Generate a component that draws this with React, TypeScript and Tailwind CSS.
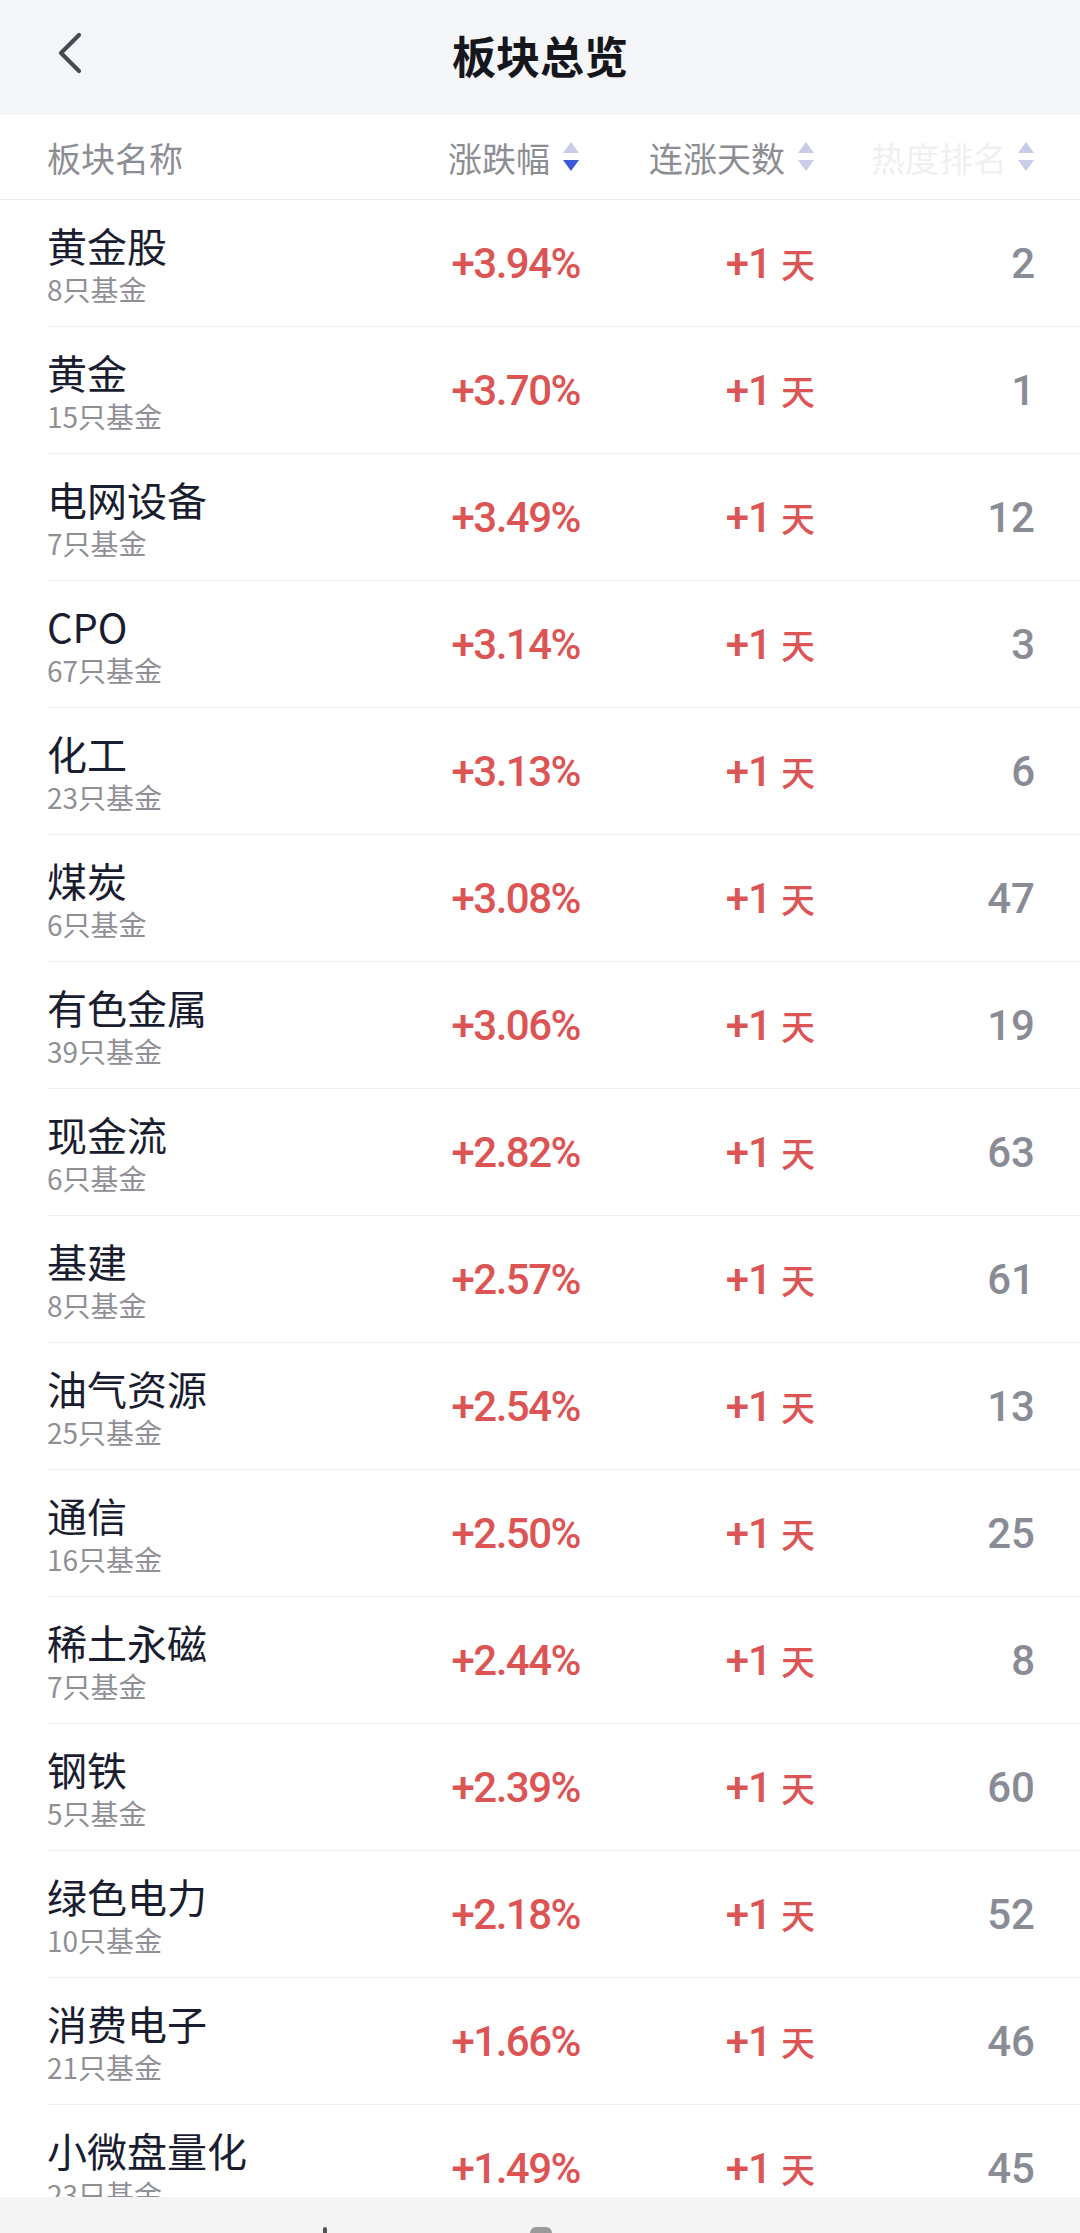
import React from "react";

const rows = [
  { name: "黄金股", funds: 8, pct: "+3.94%", rank: 2 },
  { name: "黄金", funds: 15, pct: "+3.70%", rank: 1 },
  { name: "电网设备", funds: 7, pct: "+3.49%", rank: 12 },
  { name: "CPO", funds: 67, pct: "+3.14%", rank: 3 },
  { name: "化工", funds: 23, pct: "+3.13%", rank: 6 },
  { name: "煤炭", funds: 6, pct: "+3.08%", rank: 47 },
  { name: "有色金属", funds: 39, pct: "+3.06%", rank: 19 },
  { name: "现金流", funds: 6, pct: "+2.82%", rank: 63 },
  { name: "基建", funds: 8, pct: "+2.57%", rank: 61 },
  { name: "油气资源", funds: 25, pct: "+2.54%", rank: 13 },
  { name: "通信", funds: 16, pct: "+2.50%", rank: 25 },
  { name: "稀土永磁", funds: 7, pct: "+2.44%", rank: 8 },
  { name: "钢铁", funds: 5, pct: "+2.39%", rank: 60 },
  { name: "绿色电力", funds: 10, pct: "+2.18%", rank: 52 },
  { name: "消费电子", funds: 21, pct: "+1.66%", rank: 46 },
  { name: "小微盘量化", funds: 23, pct: "+1.49%", rank: 45 },
];

function SortIcon({ active }: { active?: boolean }) {
  return (
    <svg width="18" height="32" viewBox="0 0 18 32" className="shrink-0">
      <path d="M9 1 L17 12 L1 12 Z" fill="#c9cbe8" />
      <path d="M1 19 L17 19 L9 30 Z" fill={active ? "#3c5ad8" : "#c9cbe8"} />
    </svg>
  );
}

export default function App() {
  return (
    <div className="w-[1080px] h-[2233px] flex flex-col bg-white overflow-hidden font-['Noto_Sans_CJK_SC','Noto_Sans',sans-serif]">
      {/* top bar */}
      <div className="h-[115px] shrink-0 bg-[#f5f6fa] flex items-center relative pb-[10px]">
        <div className="pl-[56px]">
          <svg width="28" height="44" viewBox="0 0 28 44">
            <path d="M23 4 L5 22 L23 40" fill="none" stroke="#474a52" strokeWidth="4.2" strokeLinecap="round" strokeLinejoin="round" />
          </svg>
        </div>
        <div className="absolute inset-x-0 top-[31px] text-center text-[44px] font-bold text-[#16171c] leading-[48px] pointer-events-none">
          板块总览
        </div>
      </div>

      {/* column header */}
      <div className="h-[85px] shrink-0 flex items-center pl-[47px] pr-[45px] border-b border-[#ececf0] text-[34px] text-[#8d8e93]">
        <div className="w-[400px]">板块名称</div>
        <div className="w-[133px] flex items-center justify-end gap-[12px]">
          <span>涨跌幅</span>
          <SortIcon active />
        </div>
        <div className="w-[235px] flex items-center justify-end gap-[12px]">
          <span>连涨天数</span>
          <SortIcon />
        </div>
        <div className="w-[220px] flex items-center justify-end gap-[10px]">
          <span className="text-[#f0f0f4]">热度排名</span>
          <SortIcon />
        </div>
      </div>

      {/* list */}
      <div className="flex-1 overflow-hidden">
        {rows.map((r) => (
          <div key={r.name} className="ml-[47px] h-[127px] flex items-center pr-[45px] border-b border-[#f0f0f3]">
            <div className="w-[400px] flex flex-col pt-[2px]">
              <span className="text-[40px] leading-[50px] text-[#1a1d30]">{r.name}</span>
              <span className="text-[28px] leading-[38px] text-[#8e9096]">{r.funds}只基金</span>
            </div>
            <div className="w-[133px] text-right font-['Roboto',sans-serif] font-medium text-[42px] tracking-[-1.5px] text-[#dc5454]">
              {r.pct}
            </div>
            <div className="w-[235px] flex items-center justify-end text-[#dc5454]">
              <span className="font-['Roboto',sans-serif] font-medium text-[42px] tracking-[-1px]">+1</span>
              <span className="ml-[10px] text-[34px] font-medium">天</span>
            </div>
            <div className="w-[220px] text-right font-['Roboto',sans-serif] font-medium text-[42px] text-[#8a8c95]">
              {r.rank}
            </div>
          </div>
        ))}
      </div>

      {/* bottom bar, cut off */}
      <div className="h-[36px] shrink-0 bg-[#f4f4f4] flex items-start pt-[30px]">
        <div className="ml-[318px] w-[14px] h-[6px] flex justify-center">
          <div className="w-[4px] h-[6px] bg-[#555] rounded-t-sm" />
        </div>
        <div className="ml-[198px] w-[22px] h-[6px] rounded-t-full bg-[#9a9a9a]" />
      </div>
    </div>
  );
}
